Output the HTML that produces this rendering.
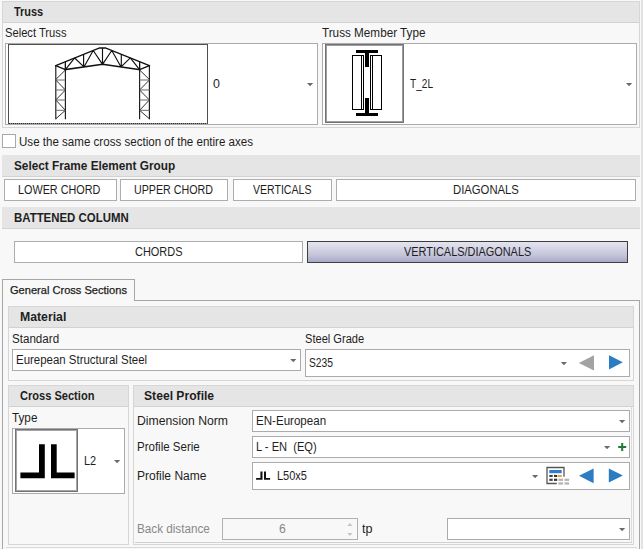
<!DOCTYPE html>
<html><head><meta charset="utf-8"><title>Truss</title><style>
html,body{margin:0;padding:0}
body{width:643px;height:549px;overflow:hidden;background:#f8f8f8;position:relative;font-family:"Liberation Sans",sans-serif;font-size:12px;color:#1e1e1e}
.a{position:absolute;box-sizing:border-box}
.t{position:absolute;white-space:pre;line-height:14px;height:14px;transform-origin:0 0}
.grp{border:1px solid #d6d6d6;background:#f8f8f8}
.band{background:#e5e5e5;border-bottom:1px solid #d2d2d2}
.cb{border:1px solid #ababab;background:#fff}
.btn{border:1px solid #adadad;background:#fff}
svg{position:absolute;left:0;top:0;overflow:visible}
</style></head><body>
<div class="a " style="left:641px;top:0px;width:2px;height:549px;background:#e2e2e2"></div>
<div class="a grp" style="left:2px;top:1px;width:638px;height:127px;"></div>
<div class="a band" style="left:3px;top:2px;width:636px;height:21px;"></div>
<div class="a cb" style="left:5px;top:43px;width:313px;height:82px;"></div>
<div class="a " style="left:8px;top:44px;width:200px;height:80px;border:1px solid #505050;background:#fff"></div>
<div class="a " style="left:9px;top:123px;width:198px;height:1px;background:repeating-linear-gradient(90deg,#2c2c2c 0 1px,#909090 1px 2px)"></div>
<div class="a cb" style="left:322px;top:43px;width:315px;height:82px;"></div>
<div class="a " style="left:325px;top:44px;width:79px;height:79px;border:1px solid #737373;box-shadow:inset 0 0 0 1px #9c9ca2;background:#fff"></div>
<div class="a " style="left:2px;top:134px;width:14px;height:14px;border:1px solid #a9a9a9;background:#fff"></div>
<div class="a band" style="left:2px;top:155px;width:638px;height:22px;"></div>
<div class="a btn" style="left:4px;top:179px;width:113px;height:22px;"></div>
<div class="a btn" style="left:120px;top:179px;width:108px;height:22px;"></div>
<div class="a btn" style="left:233px;top:179px;width:99px;height:22px;"></div>
<div class="a btn" style="left:336px;top:179px;width:300px;height:22px;"></div>
<div class="a band" style="left:2px;top:207px;width:638px;height:22px;"></div>
<div class="a btn" style="left:14px;top:241px;width:289px;height:22px;"></div>
<div class="a " style="left:307px;top:241px;width:321px;height:22px;border:1px solid #3e3e3e;background:linear-gradient(#e4e4f0 0%,#d6d6e6 30%,#c4c4da 65%,#a9a9c9 100%)"></div>
<div class="a " style="left:2px;top:300px;width:638px;height:261px;border:1px solid #a6a6a6;background:#f8f8f8"></div>
<div class="a " style="left:2px;top:279px;width:133px;height:22px;border:1px solid #a6a6a6;border-bottom:none;background:#f8f8f8"></div>
<div class="a " style="left:6px;top:547px;width:631px;height:1px;background:#d8d8d8"></div>
<div class="a grp" style="left:8px;top:306px;width:626px;height:75px;"></div>
<div class="a band" style="left:9px;top:307px;width:624px;height:21px;"></div>
<div class="a cb" style="left:12px;top:349px;width:289px;height:22px;"></div>
<div class="a cb" style="left:305px;top:349px;width:325px;height:28px;"></div>
<div class="a grp" style="left:8px;top:385px;width:121px;height:160px;"></div>
<div class="a band" style="left:9px;top:386px;width:119px;height:21px;"></div>
<div class="a cb" style="left:12px;top:428px;width:113px;height:66px;"></div>
<div class="a " style="left:15px;top:429px;width:63px;height:63px;border:1px solid #737373;box-shadow:inset 0 0 0 1px #a4a4aa;background:#fff"></div>
<div class="a grp" style="left:133px;top:385px;width:501px;height:160px;"></div>
<div class="a band" style="left:134px;top:386px;width:499px;height:21px;"></div>
<div class="a " style="left:135px;top:407px;width:497px;height:136px;border-right:1px solid #dcdcdc;border-bottom:1px solid #d0d0d0"></div>
<div class="a cb" style="left:252px;top:410px;width:378px;height:22px;"></div>
<div class="a cb" style="left:252px;top:436px;width:378px;height:22px;"></div>
<div class="a cb" style="left:252px;top:462px;width:378px;height:28px;"></div>
<div class="a " style="left:222px;top:518px;width:136px;height:22px;border:1px solid #b0b0b0;background:#f8f8f8"></div>
<div class="a cb" style="left:447px;top:518px;width:183px;height:22px;"></div>
<svg width="643" height="549" viewBox="0 0 643 549">
<polygon points="307,83 313.2,83 310.1,86.2" fill="#6a6a72"/>
<polygon points="626,83 632.2,83 629.1,86.2" fill="#6a6a72"/>
<polygon points="290.2,359 296.4,359 293.3,362.2" fill="#6a6a72"/>
<polygon points="560.8,362 567,362 563.9,365.2" fill="#6a6a72"/>
<polygon points="114,460 120.2,460 117.1,463.2" fill="#6a6a72"/>
<polygon points="619,420 625.2,420 622.1,423.2" fill="#6a6a72"/>
<polygon points="604,446 610.2,446 607.1,449.2" fill="#6a6a72"/>
<polygon points="532,475 538.2,475 535.1,478.2" fill="#6a6a72"/>
<polygon points="619,528 625.2,528 622.1,531.2" fill="#6a6a72"/>
<polygon points="578.8,363 594,355.3 594,370.5" fill="#a3a3a3"/>
<polygon points="609,355.2 622.8,362.3 609,369.4" fill="#2b7cc3"/>
<polygon points="579,475.8 593.6,468.4 593.6,483.2" fill="#2b7cc3"/>
<polygon points="608.8,468.4 622.9,475.4 608.8,482.4" fill="#2b7cc3"/>
<path d="M618.2 446h3v-3h2v3h3v2h-3v3h-2v-3h-3z" fill="#1e7a36"/>
<polygon points="347.3,526 352.5,526 349.9,523" fill="#c4c4cc"/>
<polygon points="347.3,533 352.5,533 349.9,536" fill="#c4c4cc"/>
<path d="M556.8 483.5H547V467.5H564V476.8" fill="none" stroke="#565656" stroke-width="1.3"/>
<rect x="549.3" y="470" width="12.4" height="3.2" fill="#2b7cd0"/>
<rect x="549.3" y="474.9" width="3.4" height="2.1" fill="#444"/>
<rect x="554" y="474.9" width="3.2" height="2.1" fill="#333"/>
<rect x="558" y="474.9" width="3.8" height="2.1" fill="#f0a040"/>
<rect x="549.3" y="478.7" width="3.4" height="2.2" fill="#444"/>
<rect x="554" y="478.7" width="3.2" height="2.2" fill="#333"/>
<rect x="558.4" y="478.7" width="4.6" height="2.2" fill="#b4b4b4"/>
<rect x="564.5" y="478.7" width="4.6" height="2.2" fill="#b4b4b4"/>
<rect x="558.4" y="482.3" width="4.6" height="2.3" fill="#b4b4bc"/>
<rect x="564.5" y="482.3" width="4.6" height="2.3" fill="#b4b4bc"/>
<path d="M256.1 478h4.3v-6.6h2.1v8.4h-6.4zM264 471.4h2v6.6h4.1v1.8h-6.1z" fill="#111"/>
<path d="M20.4 472.5H39V444.2H44.8V478.3H20.4zM51 444.2H56.7V472.5H74.6V478.3H51z" fill="#000"/>
<rect x="356" y="50" width="22" height="3" fill="#000"/><rect x="365" y="50" width="4" height="17" fill="#000"/>
<rect x="356" y="113" width="22" height="3" fill="#000"/><rect x="365" y="98" width="4" height="17" fill="#000"/>
<g fill="none" stroke="#000" stroke-width="1"><rect x="352.5" y="55.5" width="11" height="54"/><line x1="361.5" y1="55.5" x2="361.5" y2="109.5"/><rect x="370.5" y="55.5" width="11" height="54"/><line x1="372.5" y1="55.5" x2="372.5" y2="109.5"/></g>
<path d="M55.8 65.6L99.6 47.9H105.4L149.4 65.6M65.4 69.6L102.6 64.3L139.6 69.6" fill="none" stroke="#111" stroke-width="1.5" stroke-linejoin="miter" stroke-linecap="square"/>
<path d="M55.8 65.6V119.3M65.4 63.6V119.3M139.6 63.6V119.3M149.4 65.6V119.3" fill="none" stroke="#1a1a1a" stroke-width="1.15"/>
<path d="M55.80 65.60L65.40 69.60M65.40 61.72L65.40 69.60M65.40 69.60L74.68 57.97M74.68 57.97L83.95 66.96M83.60 67.01L83.60 54.37M83.95 66.96L93.22 50.48M93.22 50.48L102.50 64.31M102.50 47.90L102.50 64.31M102.50 64.31L111.78 50.46M111.78 50.46L121.05 66.94M121.30 66.98L121.30 54.30M121.05 66.94L130.32 57.93M130.32 57.93L139.60 69.60M139.60 61.66L139.60 69.60M139.60 69.60L149.40 65.60" fill="none" stroke="#111" stroke-width="1.15"/>
<path d="M65.40 70.00L55.80 79.50M55.80 80.00L65.40 90.00M65.40 90.00L55.80 100.00M55.80 100.00L65.40 110.30M65.40 110.30L55.80 118.80M139.60 70.00L149.40 79.50M149.40 80.00L139.60 90.00M139.60 90.00L149.40 100.00M149.40 100.00L139.60 110.30M139.60 110.30L149.40 118.80" fill="none" stroke="#1a1a1a" stroke-width="0.9"/>
<path d="M55.8 80H65.4M139.6 80H149.4M55.8 90H65.4M139.6 90H149.4M55.8 100H65.4M139.6 100H149.4M55.8 110.3H65.4M139.6 110.3H149.4" fill="none" stroke="#6a6a6a" stroke-width="1"/>
</svg>
<span class="t" style="left:14.1px;top:5px;transform:scaleX(0.912);font-weight:bold;">Truss</span>
<span class="t" style="left:4.9px;top:26px;transform:scaleX(0.931);">Select Truss</span>
<span class="t" style="left:322.0px;top:26px;transform:scaleX(0.976);">Truss Member Type</span>
<span class="t" style="left:212.6px;top:77px;transform:scaleX(1.032);">0</span>
<span class="t" style="left:410.3px;top:77px;transform:scaleX(0.841);">T_2L</span>
<span class="t" style="left:19.3px;top:135px;transform:scaleX(0.964);">Use the same cross section of the entire axes</span>
<span class="t" style="left:13.7px;top:159px;transform:scaleX(0.982);font-weight:bold;">Select Frame Element Group</span>
<span class="t" style="left:18.3px;top:183px;transform:scaleX(0.902);">LOWER CHORD</span>
<span class="t" style="left:134.0px;top:183px;transform:scaleX(0.891);">UPPER CHORD</span>
<span class="t" style="left:253.3px;top:183px;transform:scaleX(0.879);">VERTICALS</span>
<span class="t" style="left:452.8px;top:183px;transform:scaleX(0.941);">DIAGONALS</span>
<span class="t" style="left:14.1px;top:211px;transform:scaleX(0.952);font-weight:bold;">BATTENED COLUMN</span>
<span class="t" style="left:135.2px;top:245px;transform:scaleX(0.913);">CHORDS</span>
<span class="t" style="left:403.9px;top:245px;transform:scaleX(0.910);">VERTICALS/DIAGONALS</span>
<span class="t" style="left:10.1px;top:283px;transform:scaleX(1.036);font-size:10.7px;-webkit-text-stroke:0.25px #1e1e1e;">General Cross Sections</span>
<span class="t" style="left:20.1px;top:310px;transform:scaleX(1.021);font-weight:bold;">Material</span>
<span class="t" style="left:11.9px;top:332px;transform:scaleX(0.967);">Standard</span>
<span class="t" style="left:15.7px;top:353px;transform:scaleX(0.954);">Eurepean Structural Steel</span>
<span class="t" style="left:304.8px;top:332px;transform:scaleX(0.924);">Steel Grade</span>
<span class="t" style="left:308.8px;top:356px;transform:scaleX(0.856);">S235</span>
<span class="t" style="left:19.9px;top:389px;transform:scaleX(0.922);font-weight:bold;">Cross Section</span>
<span class="t" style="left:144.4px;top:389px;transform:scaleX(1.011);font-weight:bold;">Steel Profile</span>
<span class="t" style="left:12.4px;top:411px;transform:scaleX(0.976);">Type</span>
<span class="t" style="left:84.1px;top:454px;transform:scaleX(0.913);">L2</span>
<span class="t" style="left:136.9px;top:414px;transform:scaleX(1.019);">Dimension Norm</span>
<span class="t" style="left:136.9px;top:440px;transform:scaleX(0.959);">Profile Serie</span>
<span class="t" style="left:136.9px;top:469px;transform:scaleX(1.001);">Profile Name</span>
<span class="t" style="left:256.2px;top:414px;transform:scaleX(0.964);">EN-European</span>
<span class="t" style="left:256.2px;top:440px;transform:scaleX(0.926);">L - EN&nbsp; (EQ)</span>
<span class="t" style="left:276.5px;top:469px;transform:scaleX(0.917);">L50x5</span>
<span class="t" style="left:137.0px;top:522px;transform:scaleX(0.974);color:#888888;">Back distance</span>
<span class="t" style="left:279.1px;top:522px;transform:scaleX(1.017);color:#868686;">6</span>
<span class="t" style="left:361.8px;top:522px;transform:scaleX(1.048);">tp</span>
</body></html>
